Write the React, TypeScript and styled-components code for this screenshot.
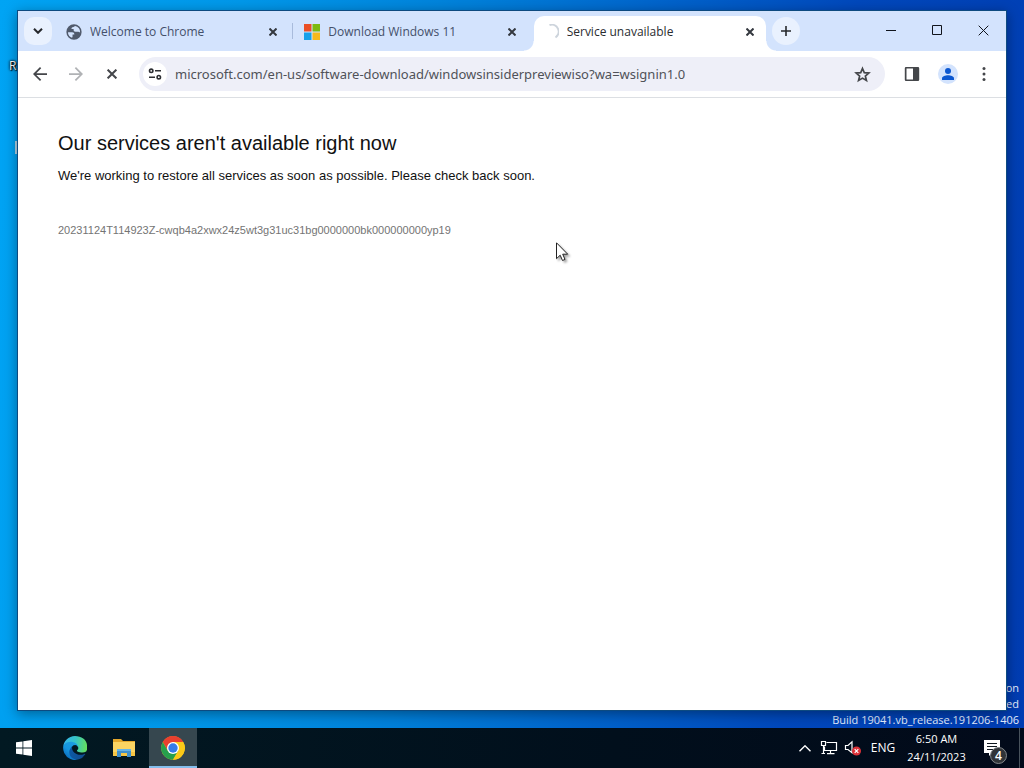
import React from 'react';
import styled, { createGlobalStyle, css } from 'styled-components';

const uiFont = `'Open Sans', 'Noto Sans', sans-serif`;
const addressFont = `'Noto Sans', 'Open Sans', sans-serif`;

const GlobalStyle = createGlobalStyle`
  *, *::before, *::after { box-sizing: border-box; }
  body { margin: 0; font-family: ${uiFont}; }
  button { font: inherit; color: inherit; border: 0; padding: 0; background: none; cursor: default; }
  h1, p { margin: 0; }
  svg { display: block; flex: none; }
`;

const Screen = styled.div`
  min-height: 100vh;
  display: flex;
  flex-direction: column;
  overflow: hidden;
`;

const Desktop = styled.main`
  position: relative;
  flex: 1;
  display: flex;
  padding: 10px 17px 17px;
  background: linear-gradient(96deg, #00a4f4 0%, #0098ea 22%, #0084dc 40%, #0064cc 60%, #0048bc 78%, #003cb2 100%);
`;

const IconLabel = styled.span`
  position: absolute;
  left: 9px;
  top: 58px;
  font-size: 12px;
  line-height: 16px;
  color: #fff;
  text-shadow: 1px 1px 1px #000, 0 0 3px #000, 0 0 2px #000;
`;

const IconEdge = styled.span`
  position: absolute;
  left: 15px;
  top: 141px;
  width: 3px;
  height: 13px;
  background: #b4d4e6;
`;

const Watermark = styled.div`
  position: absolute;
  right: 5px;
  bottom: 0;
  text-align: right;
  font-size: 11px;
  line-height: 16px;
  color: #e4eeff;
`;

const Window = styled.section`
  position: relative;
  flex: 1;
  min-width: 0;
  display: flex;
  flex-direction: column;
  background: #fff;
  border: 1px solid #0d4a80;
  box-shadow: 0 3px 12px rgba(0, 0, 0, 0.38);
`;

const TabStrip = styled.header`
  display: flex;
  align-items: flex-start;
  height: 40px;
  background: #d3e3fd;
`;

const stripButton = css`
  display: flex;
  align-items: center;
  justify-content: center;
  width: 28px;
  height: 28px;
  margin-top: 6px;
  flex: none;
  background: #e9f1fe;
  color: #26282c;
`;

const TabSearch = styled.button`
  ${stripButton}
  margin-left: 6px;
  margin-right: 5px;
  border-radius: 10px;
`;

const NewTab = styled.button`
  ${stripButton}
  margin-left: 6px;
  border-radius: 14px;
`;

const Tabs = styled.div`
  display: flex;
  flex: 0 1 709px;
  gap: 6px;
  min-width: 0;
`;

const Tab = styled.div<{ $active?: boolean; $divider?: boolean }>`
  position: relative;
  flex: 1 1 0;
  min-width: 0;
  display: flex;
  align-items: center;
  gap: 8px;
  height: 35px;
  margin-top: 5px;
  padding: 0 8px 4px 9px;
  border-radius: 10px 10px 0 0;
  font-size: 12px;
  line-height: 16px;
  color: #44506a;
  ${p => p.$divider && css`
    &::after {
      content: '';
      position: absolute;
      right: -4px;
      top: 7px;
      width: 1px;
      height: 16px;
      background: #a8bbdc;
    }
  `}
  ${p => p.$active && css`
    background: #fff;
    color: #2a2c30;
    &::before, &::after {
      content: '';
      position: absolute;
      bottom: 0;
      width: 10px;
      height: 10px;
    }
    &::before {
      right: 100%;
      background: radial-gradient(circle at 0 0, transparent 9px, #fff 10px);
    }
    &::after {
      left: 100%;
      background: radial-gradient(circle at 100% 0, transparent 9px, #fff 10px);
    }
  `}
`;

const TabTitle = styled.span`
  flex: 1;
  min-width: 0;
  overflow: hidden;
  white-space: nowrap;
`;

const TabClose = styled.button`
  width: 16px;
  height: 16px;
  display: grid;
  place-items: center;
  color: #34383f;
`;

const Caption = styled.div`
  display: flex;
  margin-left: auto;
`;

const CaptionButton = styled.button`
  width: 46px;
  height: 38px;
  display: grid;
  place-items: center;
  color: #10141c;
`;

const Toolbar = styled.div`
  position: relative;
  display: flex;
  align-items: center;
  height: 47px;
  padding: 0 4px;
  background: #fff;
  border-bottom: 1px solid #dcdfe3;
`;

const ToolButton = styled.button<{ $dim?: boolean }>`
  width: 36px;
  height: 34px;
  flex: none;
  display: grid;
  place-items: center;
  color: ${p => (p.$dim ? '#b0b2b5' : '#44464a')};
`;

const Omnibox = styled.div`
  flex: 1;
  min-width: 0;
  display: flex;
  align-items: center;
  height: 34px;
  margin: 0 9px;
  padding: 0 5px 0 4px;
  border-radius: 17px;
  background: #eeeff8;
`;

const SiteInfo = styled.button`
  width: 24px;
  height: 24px;
  flex: none;
  display: grid;
  place-items: center;
  border-radius: 12px;
  background: #fff;
  color: #2c2e32;
`;

const Url = styled.input`
  flex: 1;
  min-width: 0;
  height: 24px;
  margin-left: 8px;
  padding: 0;
  border: 0;
  outline: 0;
  background: none;
  font-family: ${addressFont};
  font-size: 13px;
  color: #505258;
`;

const Page = styled.article`
  flex: 1;
  padding: 33px 40px;
  font-family: 'Liberation Sans', Arial, sans-serif;
  color: #111;
`;

const Heading = styled.h1`
  font-size: 20px;
  line-height: 24px;
  font-weight: 400;
`;

const Message = styled.p`
  margin-top: 13px;
  font-size: 13px;
  line-height: 16px;
`;

const Reference = styled.p`
  margin-top: 39px;
  font-size: 11px;
  line-height: 14px;
  color: #747474;
`;

const Pointer = styled.div`
  position: absolute;
  left: 538px;
  top: 231px;
`;

const Taskbar = styled.footer`
  display: flex;
  height: 40px;
  flex: none;
  background: linear-gradient(90deg, #021922, #010f1c 60%, #020a1a);
  color: #fff;
`;

const StartButton = styled.button`
  width: 48px;
  margin-right: 3px;
  display: grid;
  place-items: center;
`;

const TaskButton = styled.button<{ $active?: boolean }>`
  width: 48px;
  margin-right: 1px;
  display: grid;
  place-items: center;
  ${p => p.$active && css`
    background: #36474f;
    box-shadow: inset 0 -2px #83bdec;
  `}
`;

const Tray = styled.div`
  display: flex;
  align-items: stretch;
  margin-left: auto;
  font-size: 12px;
  line-height: 18px;
`;

const TrayButton = styled.button`
  width: 24px;
  display: grid;
  place-items: center;
`;

const Language = styled.button`
  width: 36px;
  text-align: center;
`;

const Clock = styled.button`
  width: 71px;
  font-size: 11px;
  text-align: center;
  white-space: nowrap;
`;

const Notifications = styled.button`
  position: relative;
  width: 48px;
  padding-right: 8px;
  display: grid;
  place-items: center;
  border-right: 1px solid #48525c;
  margin-right: 4px;
`;

const Count = styled.span`
  position: absolute;
  right: 12px;
  top: 19px;
  width: 17px;
  height: 17px;
  border: 1px solid #84888c;
  border-radius: 9px;
  background: #303438;
  font-size: 12px;
  line-height: 15px;
  font-weight: 600;
  text-align: center;
`;

const Cross = ({ size = 8, width = 2 }: { size?: number; width?: number }) => (
  <svg width={size} height={size} viewBox="0 0 8 8" stroke="currentColor" strokeWidth={(width * 8) / size}>
    <path d="M.5 .5 7.5 7.5M7.5 .5.5 7.5" />
  </svg>
);

const Globe = () => (
  <svg width="16" height="16" viewBox="1 1 22 22" fill="#505a6c">
    <path d="M12 1.5a10.5 10.5 0 1 0 0 21 10.5 10.5 0 0 0 0-21zM4 12.5h5.5c2 0 3 1 3 3H10v3.2l-.7 1.2A8.4 8.4 0 0 1 3.7 13zM13.5 3.7A8.4 8.4 0 0 1 20.4 13c-.6-1-1.5-1.5-2.6-1.5h-4c-1.4 0-2.3-.9-2.3-2.2V8h-3c0-2 1-3 2.7-3 1.3 0 1.3-.9 2.3-1.3z" />
  </svg>
);

const MicrosoftLogo = () => (
  <svg width="16" height="16" viewBox="0 0 16 16">
    <path fill="#ea4f26" d="M0 0h7.5v7.5H0z" />
    <path fill="#7cba12" d="M8.5 0H16v7.5H8.5z" />
    <path fill="#16a0ea" d="M0 8.5h7.5V16H0z" />
    <path fill="#f7b91c" d="M8.5 8.5H16V16H8.5z" />
  </svg>
);

const Spinner = () => (
  <svg width="16" height="16" viewBox="0 0 16 16" fill="none" stroke="#cdd4dc" strokeWidth="2">
    <path d="M6.500 1A7 7 0 0 1 12.500 13.500" />
  </svg>
);

const Arrow = ({ forward }: { forward?: boolean }) => (
  <svg width="14" height="14" viewBox="4 4 16 16" fill="currentColor">
    {forward ? (
      <path d="M12 4l-1.4 1.4 5.6 5.6H4v2h12.2l-5.6 5.6L12 20l8-8z" />
    ) : (
      <path d="M20 11H7.8l5.6-5.6L12 4l-8 8 8 8 1.4-1.4L7.8 13H20z" />
    )}
  </svg>
);

const Tune = () => (
  <svg width="14" height="12" viewBox="0 0 14 12" fill="none" stroke="currentColor" strokeWidth="1.6">
    <circle cx="3.2" cy="2.8" r="1.7" />
    <path d="M7 2.8h6M1 9.2h6" />
    <circle cx="10.8" cy="9.2" r="1.7" />
  </svg>
);

const Star = () => (
  <svg width="17" height="17" viewBox="1 1 22 22" fill="none" stroke="currentColor" strokeWidth="2.2">
    <path d="M12 4.2l2.3 5.4 5.9.5-4.5 3.9 1.4 5.7-5.1-3-5.1 3L8.3 14 3.8 10.1l5.9-.5z" />
  </svg>
);

const SidePanel = () => (
  <svg width="16" height="16" viewBox="0 0 16 16" fill="currentColor">
    <path fillRule="evenodd" d="M2 1h12a1.2 1.2 0 0 1 1.2 1.200v11.600A1.200 1.200 0 0 1 14 15H2a1.200 1.200 0 0 1-1.200-1.200V2.200A1.200 1.200 0 0 1 2 1zm.500 1.600v10.800H9V2.600z" />
  </svg>
);

const Profile = () => (
  <svg width="20" height="20" viewBox="0 0 20 20">
    <circle cx="10" cy="10" r="10" fill="#d3e3fd" />
    <g fill="#0b57d0">
      <circle cx="10" cy="7" r="3" />
      <path d="M4 16v-1.800c0-2 3.500-3 6-3s6 1 6 3V16z" />
    </g>
  </svg>
);

const Dots = () => (
  <svg width="4" height="16" viewBox="0 0 4 16" fill="currentColor">
    <circle cx="2" cy="2.500" r="1.500" />
    <circle cx="2" cy="8" r="1.500" />
    <circle cx="2" cy="13.500" r="1.500" />
  </svg>
);

const WindowsLogo = () => (
  <svg width="16" height="16" viewBox="0 0 16 16" fill="#fff">
    <path d="M0 2.300l6.500-.9v6.100H0zM7.300 1.300 16 0v7.500H7.300zM0 8.500h6.500v6.100L0 13.700zM7.300 8.500H16V16l-8.700-1.200z" />
  </svg>
);

const EdgeLogo = () => (
  <svg width="24" height="24" viewBox="0 0 256 256">
    <defs>
      <linearGradient id="edgeBase" x1="0.1" y1="0.5" x2="1" y2="0.6">
        <stop offset="0" stopColor="#0c59a4" />
        <stop offset="1" stopColor="#114a8b" />
      </linearGradient>
      <linearGradient id="edgeLeft" x1="0.8" y1="0.2" x2="0.3" y2="1">
        <stop offset="0" stopColor="#1b9de2" />
        <stop offset="0.5" stopColor="#1595df" />
        <stop offset="1" stopColor="#0a68b8" />
      </linearGradient>
      <linearGradient id="edgeTop" x1="0" y1="0.4" x2="1" y2="0.5">
        <stop offset="0" stopColor="#35b5ee" />
        <stop offset="0.5" stopColor="#36c4c6" />
        <stop offset="1" stopColor="#66e05a" />
      </linearGradient>
    </defs>
    <path fill="url(#edgeBase)" d="M231 190a94 94 0 0 1-10 5 102 102 0 0 1-36 6c-48 0-89-33-89-75 0-12 7-22 16-27-43 2-54 47-54 73 0 74 68 82 83 82 8 0 20-2 27-5h2a128 128 0 0 0 66-53c3-4-1-8-5-6z" />
    <path fill="url(#edgeLeft)" d="M106 241a79 79 0 0 1-23-21 81 81 0 0 1 29-121c3-1 8-4 16-4a33 33 0 0 1 26 13 33 33 0 0 1 7 19c0 0 25-80-80-80-44 0-80 42-80 78a130 130 0 0 0 12 56 128 128 0 0 0 156 67 75 75 0 0 1-63-7z" />
    <path fill="url(#edgeTop)" d="M152 149c-1 1-3 3-3 7 0 3 2 6 6 9 18 13 53 11 53 11a76 76 0 0 0 39-11 79 79 0 0 0 9-68C254 40 194 0 128 0A128 128 0 0 0 1 126c1-36 37-66 80-66 4 0 24 0 43 10 17 9 26 19 32 30 6 11 7 24 7 30s-3 13-11 19z" />
  </svg>
);

const FolderLogo = () => (
  <svg width="24" height="24" viewBox="0 0 24 24">
    <path fill="#e5a82c" d="M1 3h8l2 2h12v3H1z" />
    <path fill="#fbd462" d="M1 6h22v14H1z" />
    <path fill="#f6c544" d="M1 16h22v4H1z" />
    <path fill="#3f8fcb" d="M5 13h14v8h-4v-4H9v4H5z" />
    <path fill="#66b4e6" d="M5 13h14v2H5z" />
  </svg>
);

const ChromeLogo = () => (
  <svg width="24" height="24" viewBox="0 0 48 48">
    <circle cx="24" cy="24" r="23.5" fill="#fbc918" />
    <path fill="#e8402f" d="M24 12h20.500A23.600 23.600 0 0 0 3.600 12L13.800 30z" />
    <path fill="#269f4d" d="M34.300 30 24 47.600A23.600 23.600 0 0 1 3.600 12l10.200 18z" />
    <path fill="#fbc918" d="M34.300 30 24 47.600A23.600 23.600 0 0 0 44.500 12H24z" />
    <circle cx="24" cy="24" r="12" fill="#fff" />
    <circle cx="24" cy="24" r="9.4" fill="#347be8" />
  </svg>
);

const Network = () => (
  <svg width="18" height="16" viewBox="0 0 18 16" fill="none" stroke="#fff" strokeWidth="1.2">
    <path d="M6.500 2.500h10v8h-12v-4M10.500 10.500v3M7 13.600h7.500M1.500 1.500h4v4h-4zM3.500 5.500v8M1.500 13.500H5" />
  </svg>
);

const Sound = () => (
  <svg width="18" height="16" viewBox="0 0 18 16">
    <path d="M1.500 5.500H4L8 1.800v11L4 9.500H1.500z" fill="none" stroke="#fff" strokeWidth="1.2" />
    <circle cx="12.5" cy="11" r="4.5" fill="#dc3138" />
    <path d="M10.700 9.200l3.600 3.600M14.300 9.200l-3.600 3.600" stroke="#fff" strokeWidth="1.2" />
  </svg>
);

const Bubble = () => (
  <svg width="16" height="16" viewBox="0 0 16 16">
    <path fill="#fff" d="M0 0h16v13H8l-3 3v-3H0z" />
    <path stroke="#101820" strokeWidth="1" d="M3 3.500h10M3 6.500h10M3 9.500h6" />
  </svg>
);

export default function App() {
  const tabs = [
    { title: 'Welcome to Chrome', icon: <Globe />, divider: true },
    { title: 'Download Windows 11', icon: <MicrosoftLogo /> },
    { title: 'Service unavailable', icon: <Spinner />, active: true },
  ];

  return (
    <Screen>
      <GlobalStyle />
      <Desktop>
        <IconLabel>R</IconLabel>
        <IconEdge />
        <Watermark>
          <div>on</div>
          <div>ed</div>
          <div>Build 19041.vb_release.191206-1406</div>
        </Watermark>
        <Window>
          <TabStrip>
            <TabSearch aria-label="Search tabs">
              <svg width="10" height="6" viewBox="0 0 10 6" fill="none" stroke="currentColor" strokeWidth="2">
                <path d="M1 .8 5 4.800 9 .8" />
              </svg>
            </TabSearch>
            <Tabs>
              {tabs.map(tab => (
                <Tab key={tab.title} $active={tab.active} $divider={tab.divider}>
                  {tab.icon}
                  <TabTitle>{tab.title}</TabTitle>
                  <TabClose aria-label={`Close ${tab.title}`}><Cross /></TabClose>
                </Tab>
              ))}
            </Tabs>
            <NewTab aria-label="New tab">
              <svg width="10" height="10" viewBox="0 0 10 10" stroke="currentColor" strokeWidth="1.6">
                <path d="M5 0v10M0 5h10" />
              </svg>
            </NewTab>
            <Caption>
              <CaptionButton aria-label="Minimize">
                <svg width="10" height="10" viewBox="0 0 10 10" stroke="currentColor"><path d="M0 5.500h10" /></svg>
              </CaptionButton>
              <CaptionButton aria-label="Maximize">
                <svg width="10" height="10" viewBox="0 0 10 10" fill="none" stroke="currentColor"><path d="M.5.5h9v9h-9z" /></svg>
              </CaptionButton>
              <CaptionButton aria-label="Close"><Cross size={11} width={1} /></CaptionButton>
            </Caption>
          </TabStrip>
          <Toolbar>
            <ToolButton aria-label="Back"><Arrow /></ToolButton>
            <ToolButton aria-label="Forward" $dim><Arrow forward /></ToolButton>
            <ToolButton aria-label="Stop"><Cross size={10} width={2} /></ToolButton>
            <Omnibox>
              <SiteInfo aria-label="Site information"><Tune /></SiteInfo>
              <Url
                aria-label="Address"
                defaultValue="microsoft.com/en-us/software-download/windowsinsiderpreviewiso?wa=wsignin1.0"
              />
              <ToolButton aria-label="Bookmark"><Star /></ToolButton>
            </Omnibox>
            <ToolButton aria-label="Side panel"><SidePanel /></ToolButton>
            <ToolButton aria-label="Profile"><Profile /></ToolButton>
            <ToolButton aria-label="Menu"><Dots /></ToolButton>
          </Toolbar>
          <Page>
            <Heading>Our services aren't available right now</Heading>
            <Message>We're working to restore all services as soon as possible. Please check back soon.</Message>
            <Reference>20231124T114923Z-cwqb4a2xwx24z5wt3g31uc31bg0000000bk000000000yp19</Reference>
          </Page>
          <Pointer>
            <svg width="16" height="22" viewBox="0 0 16 22" filter="drop-shadow(2px 2px 1px rgba(0,0,0,.35))">
              <path d="M.5 .8v15.900l3.700-3.500 2.300 5.300 2.500-1.100-2.300-5.200h5z" fill="#fff" stroke="#222" />
            </svg>
          </Pointer>
        </Window>
      </Desktop>
      <Taskbar>
        <StartButton aria-label="Start"><WindowsLogo /></StartButton>
        <TaskButton aria-label="Microsoft Edge"><EdgeLogo /></TaskButton>
        <TaskButton aria-label="File Explorer"><FolderLogo /></TaskButton>
        <TaskButton aria-label="Google Chrome" $active><ChromeLogo /></TaskButton>
        <Tray>
          <TrayButton aria-label="Show hidden icons">
            <svg width="12" height="7" viewBox="0 0 12 7" fill="none" stroke="#fff" strokeWidth="1.4"><path d="M.5 6.300 6 .8l5.500 5.500" /></svg>
          </TrayButton>
          <TrayButton aria-label="Network"><Network /></TrayButton>
          <TrayButton aria-label="Volume"><Sound /></TrayButton>
          <Language>ENG</Language>
          <Clock>6:50 AM<br />24/11/2023</Clock>
          <Notifications aria-label="Notifications"><Bubble /><Count>4</Count></Notifications>
        </Tray>
      </Taskbar>
    </Screen>
  );
}
